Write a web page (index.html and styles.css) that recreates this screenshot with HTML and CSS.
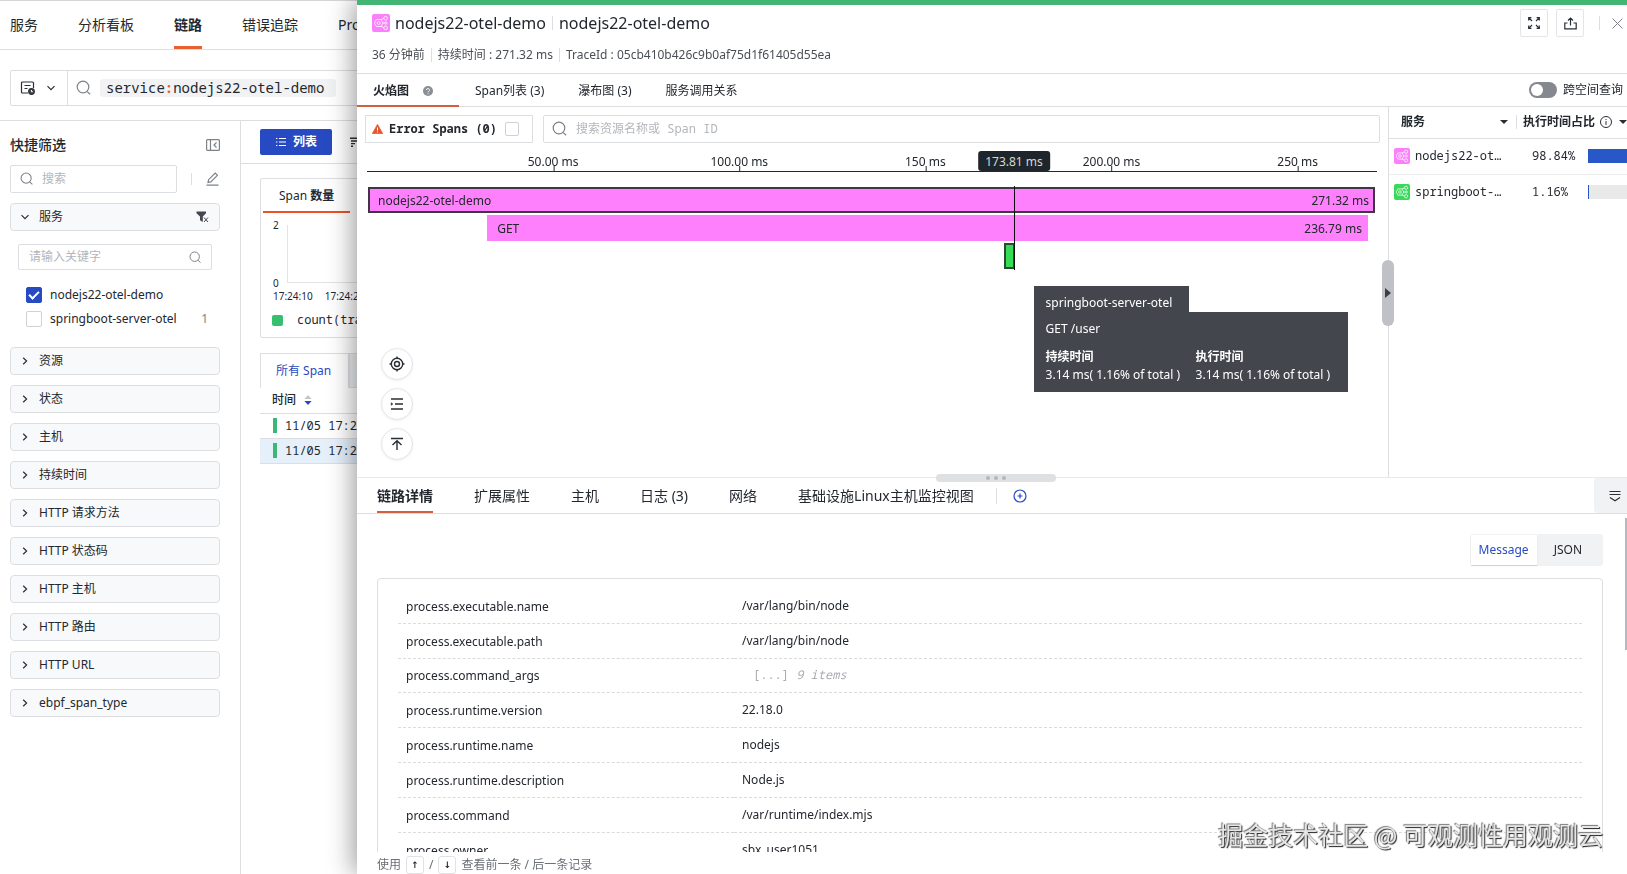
FILE: index.html
```html
<!DOCTYPE html>
<html lang="zh-CN">
<head>
<meta charset="utf-8">
<title>链路</title>
<link rel="stylesheet" href="styles.css">
</head>
<body>
<svg class="defs" aria-hidden="true">
  <symbol id="i-search" viewBox="0 0 16 16"><circle cx="7" cy="7" r="5.8"/><path d="M11.2 11.6l3 2.6"/></symbol>
  <symbol id="i-down" viewBox="0 0 10 10"><path d="M1.5 3.2L5 6.7l3.5-3.5"/></symbol>
  <symbol id="i-right" viewBox="0 0 10 10"><path d="M3.2 1.7L6.6 5 3.2 8.3"/></symbol>
  <symbol id="i-svc" viewBox="0 0 18 18"><g fill="none" stroke="#fff" stroke-width=".8"><path d="M4.4 5.500h4.600l2 3.500-2 3.500H4.400L2.400 9z"/><circle cx="6.700" cy="9" r="1.500"/><circle cx="13.600" cy="4.200" r="1.800"/><circle cx="13.800" cy="9" r="1.200"/><circle cx="13.600" cy="13.800" r="1.800"/><path d="M9 5.500l2.800-1M11 9h1.600M9 12.500l2.800 1"/></g></symbol>
</svg>

<div class="page">
  <nav class="topnav">
    <a href="#">服务</a><a href="#">分析看板</a><a href="#" class="on">链路</a><a href="#">错误追踪</a><a href="#">Profile</a>
  </nav>
  <div class="query">
    <div class="querybox">
      <button class="qtype" aria-label="查询类型">
        <svg width="16" height="16" viewBox="0 0 16 16" class="line dark"><path d="M8 13H2.5a1 1 0 0 1-1-1V3a1 1 0 0 1 1-1h10a1 1 0 0 1 1 1v5M4.5 5.5h6M4.5 8.5h3"/><circle cx="11.5" cy="11.5" r="2.8" fill="#43474f"/><path d="M11.5 10v1.7h1.3" stroke="#fff" stroke-width="1"/></svg>
        <svg width="10" height="10" class="line dark"><use href="#i-down"/></svg>
      </button>
      <div class="qtext">
        <svg width="16" height="16" class="line"><use href="#i-search"/></svg>
        <code class="tag">service<b>:</b>nodejs22-otel-demo</code>
      </div>
    </div>
  </div>
  <div class="body">
    <aside class="side">
      <div class="sidehead"><h2>快捷筛选</h2>
        <button class="plain" aria-label="收起"><svg width="14" height="12" viewBox="0 0 14 12" class="line"><rect x=".6" y=".6" width="12.8" height="10.8" rx="1"/><path d="M4.5 1v10M10.5 3.5L8 6l2.5 2.5"/></svg></button></div>
      <div class="sidesearch">
        <label class="field"><svg width="14" height="14" class="line"><use href="#i-search"/></svg><input type="text" placeholder="搜索" aria-label="搜索"></label>
        <i class="vbar"></i>
        <button class="plain" aria-label="编辑"><svg width="13" height="14" viewBox="0 0 13 14" class="line"><path d="M.5 13.2h12M2 10.5l.6-2.8 6.600-6.600 2.200 2.200-6.600 6.600z"/></svg></button>
      </div>
      <button class="facet open"><svg width="10" height="10" class="line dark"><use href="#i-down"/></svg><span>服务</span>
        <svg class="filter" width="13" height="12" viewBox="0 0 13 12"><path d="M.5.5h9.5v1.8L6.8 5.6V11L4 9.2V5.6L.5 2.3z" fill="#43474f"/><path d="M8 6.5l4 4.5M12 6.5L8 11" stroke="#43474f"/></svg></button>
      <div class="facetbody">
        <label class="field"><input type="text" placeholder="请输入关键字" aria-label="请输入关键字"><svg width="13" height="13" class="line"><use href="#i-search"/></svg></label>
        <label class="opt"><input type="checkbox" checked><span>nodejs22-otel-demo</span></label>
        <label class="opt"><input type="checkbox"><span>springboot-server-otel</span><em>1</em></label>
      </div>
      <button class="facet"><svg width="10" height="10" class="line dark"><use href="#i-right"/></svg><span>资源</span></button>
      <button class="facet"><svg width="10" height="10" class="line dark"><use href="#i-right"/></svg><span>状态</span></button>
      <button class="facet"><svg width="10" height="10" class="line dark"><use href="#i-right"/></svg><span>主机</span></button>
      <button class="facet"><svg width="10" height="10" class="line dark"><use href="#i-right"/></svg><span>持续时间</span></button>
      <button class="facet"><svg width="10" height="10" class="line dark"><use href="#i-right"/></svg><span>HTTP 请求方法</span></button>
      <button class="facet"><svg width="10" height="10" class="line dark"><use href="#i-right"/></svg><span>HTTP 状态码</span></button>
      <button class="facet"><svg width="10" height="10" class="line dark"><use href="#i-right"/></svg><span>HTTP 主机</span></button>
      <button class="facet"><svg width="10" height="10" class="line dark"><use href="#i-right"/></svg><span>HTTP 路由</span></button>
      <button class="facet"><svg width="10" height="10" class="line dark"><use href="#i-right"/></svg><span>HTTP URL</span></button>
      <button class="facet"><svg width="10" height="10" class="line dark"><use href="#i-right"/></svg><span>ebpf_span_type</span></button>
    </aside>
    <main class="main">
      <div class="modes">
        <button class="primary"><svg width="10" height="10" viewBox="0 0 10 10" stroke="#fff" stroke-width="1.1"><path d="M0 1.5h1.4M3 1.5h7M0 5h1.4M3 5h7M0 8.5h1.4M3 8.5h7"/></svg>列表</button>
        <svg width="10" height="10" viewBox="0 0 10 10" stroke="#2a2e35" stroke-width="1.4"><path d="M0 1.2h10M1 4h7M1 6.6h4M1 9.2h2"/></svg>
      </div>
      <section class="card chart">
        <h3>Span <b>数量</b></h3>
        <div class="plot">
          <div class="yax"><span>2</span><span>0</span></div>
          <div class="area"></div>
        </div>
        <div class="xax"><span>17:24:10</span><span>17:24:20</span></div>
        <div class="legend"><i></i>count(trace)</div>
      </section>
      <section class="list">
        <div class="ltabs"><button class="on">所有 Span</button><button></button></div>
        <table>
          <thead><tr><th>时间 <svg width="8" height="10" viewBox="0 0 8 10"><path d="M4 0l3.6 4H.4z" fill="#c3c6cb"/><path d="M4 10L.4 6h7.2z" fill="#274ac2"/></svg></th></tr></thead>
          <tbody><tr><td><i></i>11/05 17:24:12</td></tr><tr class="sel"><td><i></i>11/05 17:24:12</td></tr></tbody>
        </table>
      </section>
    </main>
  </div>
</div>

<div class="drawer" role="dialog" aria-label="nodejs22-otel-demo">
  <header class="dhead">
    <div class="dtitle">
      <h1><span class="svc pink"><svg width="18" height="18"><use href="#i-svc"/></svg></span>nodejs22-otel-demo<i class="vbar"></i>nodejs22-otel-demo</h1>
      <p>36 分钟前<i class="vbar"></i>持续时间 : 271.32 ms<i class="vbar"></i>TraceId : 05cb410b426c9b0af75d1f61405d55ea</p>
    </div>
    <div class="dacts">
      <button aria-label="全屏"><svg width="12" height="12" viewBox="0 0 12 12" class="line dark"><path d="M.7 3.400V.7h2.700M.7.7L4 4M8.600.7h2.700v2.700M11.300.7L8 4M.7 8.600v2.700h2.700M.7 11.300L4 8M8.600 11.300h2.700V8.600M11.300 11.300L8 8"/></svg></button>
      <button aria-label="分享"><svg width="13" height="13" viewBox="0 0 13 13" class="line dark"><path d="M3.500 6H.8v5.800h11.400V6H9.500M6.500 8.500V1.200M4 3.500l2.500-2.500L9 3.500"/></svg></button>
      <i class="vbar"></i>
      <button class="plain" aria-label="关闭"><svg width="11" height="11" viewBox="0 0 11 11" class="line thin"><path d="M.5.5l10 10M10.500.5l-10 10"/></svg></button>
    </div>
  </header>
  <div class="vtabs">
    <button class="on">火焰图 <svg width="10" height="10" viewBox="0 0 10 10"><circle cx="5" cy="5" r="5" fill="#8b8e94"/><path d="M3.500 4a1.500 1.500 0 1 1 2.200 1.300c-.5.3-.7.5-.7 1M5 7.400v.9" fill="none" stroke="#fff"/></svg></button>
    <button>Span列表 (3)</button><button>瀑布图 (3)</button><button>服务调用关系</button>
    <label class="switch"><input type="checkbox" role="switch">跨空间查询</label>
  </div>
  <div class="split">
    <section class="flame">
      <div class="ftools">
        <label class="errbox"><svg width="11" height="10" viewBox="0 0 11 10"><path d="M5.500.3L10.900 9.700H.1z" fill="#e8552d" stroke="#e8552d" stroke-linejoin="round" stroke-width=".6"/><path d="M5.500 3.500v3M5.500 7.500v1" stroke="#fff"/></svg>Error Spans (0)<input type="checkbox"></label>
        <label class="field"><svg width="16" height="16" class="line"><use href="#i-search"/></svg><input class="mono" type="text" placeholder="搜索资源名称或 Span ID" aria-label="搜索资源名称或 Span ID"></label>
      </div>
      <div class="graph">
        <div class="axis">
          <span style="left:18.43%">50.00 ms</span><span style="left:36.86%">100.00 ms</span><span style="left:55.28%">150 ms</span><span style="left:73.71%">200.00 ms</span><span style="left:92.14%">250 ms</span>
        </div>
        <div class="frow root"><span>nodejs22-otel-demo</span><span>271.32 ms</span></div>
        <div class="frow" style="margin-left:11.9%;width:87.2%"><span>GET</span><span>236.79 ms</span></div>
        <div class="frow hit" style="margin-left:63.1%;width:1.1%"></div>
        <div class="cursor" style="left:64.06%"><b>173.81 ms</b><i></i></div>
        <div class="tip" style="left:66%">
          <div class="tiphead">springboot-server-otel</div>
          <div class="tipbody"><p>GET /user</p>
            <dl><div><dt>持续时间</dt><dd>3.14 ms( 1.16% of total )</dd></div><div><dt>执行时间</dt><dd>3.14 ms( 1.16% of total )</dd></div></dl>
          </div>
        </div>
      </div>
      <div class="fabs">
        <button aria-label="定位"><svg width="16" height="16" viewBox="0 0 16 16" class="line dark bold"><circle cx="8" cy="8" r="5.700"/><circle cx="8" cy="8" r="2.500"/><path d="M8 .5v2M8 13.500v2M.5 8h2M13.500 8h2"/></svg></button>
        <button aria-label="展开"><svg width="14" height="14" viewBox="0 0 14 14" class="line dark bold"><path d="M1 2h12M5 7h8M1 12h12"/><path d="M1.200 5.800L2.800 7l-1.600 1.200z" stroke-width=".6" fill="#2a2e35"/></svg></button>
        <button aria-label="回到顶部"><svg width="14" height="14" viewBox="0 0 14 14" class="line dark bold"><path d="M1 1.500h12M7 13V4M2.500 8L7 3.700 11.500 8"/></svg></button>
      </div>
    </section>
    <section class="svcs">
      <button class="vgrip" aria-label="收起"><svg width="6" height="10" viewBox="0 0 6 10"><path d="M0 0l6 5-6 5z" fill="#3b3f47"/></svg></button>
      <table>
        <thead><tr><th><div class="hd">服务<i class="caret"></i></div></th><th class="c2"><div class="hd">执行时间占比<svg width="12" height="12" viewBox="0 0 12 12" class="line dark thin"><circle cx="6" cy="6" r="5.500"/><path d="M6 5v4M6 3v1"/></svg><i class="caret"></i></div></th></tr></thead>
        <tbody>
          <tr><td><div class="cell"><span class="svc pink"><svg width="16" height="16"><use href="#i-svc"/></svg></span>nodejs22-ot…</div></td><td><div class="cell pct"><span>98.84%</span><i class="meter"><i style="width:98.84%"></i></i></div></td></tr>
          <tr><td><div class="cell"><span class="svc green"><svg width="16" height="16"><use href="#i-svc"/></svg></span>springboot-…</div></td><td><div class="cell pct"><span>1.16%</span><i class="meter"><i style="width:1.16%"></i></i></div></td></tr>
        </tbody>
      </table>
    </section>
    <div class="hgrip"><i></i><i></i><i></i></div>
  </div>
  <div class="dtabs">
    <button class="on">链路详情</button><button>扩展属性</button><button>主机</button><button>日志 (3)</button><button>网络</button><button>基础设施Linux主机监控视图</button>
    <i class="vbar"></i>
    <button class="add" aria-label="添加"><svg width="14" height="14" viewBox="0 0 14 14" fill="none" stroke="#274ac2" stroke-width="1.200"><circle cx="7" cy="7" r="6"/><path d="M7 4.500v5M4.500 7h5"/></svg></button>
    <button class="fold" aria-label="收起"><svg width="12" height="12" viewBox="0 0 12 12" class="line dark"><path d="M.5 1.500h11M.5 4.500h11M1 7.500l5 3.300 5-3.300"/></svg></button>
  </div>
  <div class="detail">
    <div class="seg"><button class="on">Message</button><button>JSON</button></div>
    <div class="kv">
      <table>
        <tr><th>process.executable.name</th><td>/var/lang/bin/node</td></tr>
        <tr><th>process.executable.path</th><td>/var/lang/bin/node</td></tr>
        <tr class="arr"><th>process.command_args</th><td>[...] <em>9 items</em></td></tr>
        <tr><th>process.runtime.version</th><td>22.18.0</td></tr>
        <tr><th>process.runtime.name</th><td>nodejs</td></tr>
        <tr><th>process.runtime.description</th><td>Node.js</td></tr>
        <tr><th>process.command</th><td>/var/runtime/index.mjs</td></tr>
        <tr><th>process.owner</th><td>sbx_user1051</td></tr>
      </table>
    </div>
    <i class="thumb"></i>
  </div>
  <footer class="dfoot">使用 <kbd>↑</kbd>/<kbd>↓</kbd> 查看前一条 / 后一条记录</footer>
</div>
<div class="mark">掘金技术社区 @ 可观测性用观测云</div>
</body>
</html>
```
FILE: styles.css
```css
:root {
  --ink: #23272e;
  --line: #dcdee1;
  --blue: #274ac2;
  --orange: #e8602f;
  --mono: "Noto Sans Mono", "DejaVu Sans Mono", "Noto Sans CJK SC", monospace;
}
* { box-sizing: border-box; }
body {
  margin: 0;
  height: 100vh;
  overflow: hidden;
  background: #fff;
  color: var(--ink);
  font: 12px/18px "Noto Sans", "Noto Sans CJK SC", sans-serif;
}
h1, h2, h3, p, dl, dd { margin: 0; font-weight: 400; }
i, em { font-style: normal; }
button, input { font: inherit; color: inherit; margin: 0; }
button { border: 0; background: none; padding: 0; text-align: left; }
a { color: inherit; text-decoration: none; }
table { border-collapse: collapse; width: 100%; }
th, td { padding: 0; text-align: left; font-weight: 400; }
svg { flex: none; display: block; }
.defs { position: absolute; width: 0; height: 0; }
.line { fill: none; stroke: #7d8188; stroke-width: 1.2; }
.dark { stroke: #2a2e35; }
.bold { stroke-width: 1.4; }
.thin { stroke-width: 1; }
.mono { font-family: var(--mono); }
.vbar { flex: none; width: 1px; height: 14px; background: #dcdee1; }

.page { height: 100vh; display: flex; flex-direction: column; border-top: 1px solid #d5d6d8; }
.topnav { display: flex; gap: 40px; height: 49px; padding-left: 10px; border-bottom: 1px solid var(--line); font-size: 14px; line-height: 48px; }
.topnav .on { font-weight: 600; border-bottom: 3px solid var(--orange); }
.query { padding: 20px 0 14px 10px; border-bottom: 1px solid var(--line); }
.querybox { display: flex; height: 36px; border: 1px solid var(--line); border-radius: 2px; }
.qtype { display: flex; align-items: center; gap: 10px; width: 57px; padding-left: 9px; border-right: 1px solid var(--line); }
.qtext { display: flex; align-items: center; gap: 8px; padding-left: 8px; }
.tag { padding: 0 12px 0 6px; background: #f1f2f4; border-radius: 3px; font: 14px/18px var(--mono); }
.tag b { color: var(--orange); }
.body { flex: 1; display: flex; min-height: 0; }

.side { display: flex; flex-direction: column; gap: 10px; width: 241px; padding: 14px 20px 0 10px; border-right: 1px solid var(--line); }
.sidehead { display: flex; justify-content: space-between; align-items: center; height: 20px; }
.sidehead h2 { font-size: 14px; font-weight: 500; }
.sidesearch { display: flex; align-items: center; gap: 14px; }
.sidesearch .vbar { height: 12px; }
.field { display: flex; align-items: center; gap: 8px; height: 28px; padding: 0 9px; border: 1px solid var(--line); border-radius: 2px; }
.field input { flex: 1; min-width: 0; width: 100%; border: 0; outline: 0; padding: 0; background: none; }
.field input::placeholder { color: #b3b6bb; opacity: 1; }
.sidesearch .field { width: 167px; }
.facet { display: flex; align-items: center; gap: 9px; height: 28px; padding: 0 10px 0 9px; border: 1px solid var(--line); border-radius: 4px; background: #f8f9fa; }
.facet .filter { margin-left: auto; }
.facetbody { display: flex; flex-direction: column; gap: 8px; padding: 3px 8px 10px; }
.facetbody .field { height: 26px; margin-bottom: 9px; padding: 0 9px 0 10px; }
.opt { display: flex; align-items: center; gap: 8px; height: 16px; padding: 0 4px 0 8px; }
.opt em { margin-left: auto; color: #7d8188; }
input[type=checkbox] { appearance: none; width: 16px; height: 16px; border: 1px solid #cfd1d5; border-radius: 2px; background: #fff; }
input[type=checkbox]:checked { border-color: var(--blue); background: var(--blue); display: grid; place-items: center; }
input[type=checkbox]:checked::after { content: ""; width: 8px; height: 4px; border: solid #fff; border-width: 0 0 2px 2px; transform: rotate(-45deg); margin-bottom: 3px; }

.main { flex: 1; min-width: 0; }
.modes { display: flex; align-items: center; gap: 18px; height: 43px; padding-left: 19px; border-bottom: 1px solid var(--line); }
.primary { display: flex; align-items: center; gap: 7px; height: 26px; padding: 0 15px 0 16px; border-radius: 2px; background: var(--blue); color: #fff; font-weight: 700; }
.card { margin: 14px 0 15px 19px; border: 1px solid var(--line); border-radius: 2px; }
.chart { height: 160px; }
.chart h3 { display: inline-block; margin-left: 2px; padding: 8px 16px 6px; border-bottom: 2px solid #ee5124; font-size: 12px; line-height: 18px; }
.plot { display: flex; gap: 8px; height: 58px; margin-top: 12px; padding-left: 12px; }
.yax { display: flex; flex-direction: column; justify-content: space-between; margin: -9px 0; font-size: 10px; }
.area { flex: 1; border: solid #e3e4e6; border-width: 0 0 1px 1px; }
.xax { display: flex; gap: 12px; margin-top: 5px; padding-left: 12px; font-size: 10px; line-height: 16px; }
.legend { display: flex; align-items: center; gap: 14px; margin-top: 7px; padding-left: 11px; font-family: var(--mono); line-height: 18px; }
.legend i { width: 11px; height: 11px; border-radius: 2px; background: #35bf6e; }
.list { margin-left: 19px; }
.ltabs { display: flex; height: 35px; }
.ltabs button { flex: 1; border: 1px solid var(--line); background: #eceef0; }
.ltabs .on { flex: none; width: 89px; padding-left: 15px; border-width: 1px 1px 0; background: #fff; color: var(--blue); }
.list th { height: 25px; padding-left: 12px; border-bottom: 1px solid var(--line); font-weight: 500; }
.list th svg { display: inline-block; margin-left: 5px; vertical-align: -1px; }
.list td { height: 25px; padding-left: 13px; border-bottom: 1px solid var(--line); font-family: var(--mono); white-space: nowrap; }
.list td i { display: inline-block; width: 4px; height: 15px; margin-right: 8px; background: #3bb876; vertical-align: -3px; }
.sel { background: #e5f0fa; }

.drawer { position: fixed; top: 0; right: 0; bottom: 0; left: 357px; display: flex; flex-direction: column; border-top: 5px solid #42b573; background: #fff; box-shadow: -4px 0 24px rgba(0, 0, 0, .38); }
.dhead { flex: none; display: flex; justify-content: space-between; align-items: flex-start; height: 69px; padding: 4px 0 0 15px; border-bottom: 1px solid var(--line); }
.dtitle h1 { display: flex; align-items: center; height: 28px; font-size: 16px; }
.dtitle h1 .svc { margin-right: 5px; }
.dtitle h1 .vbar { margin: 0 6px; }
.dtitle p { display: flex; align-items: center; height: 36px; color: #4a4e55; }
.dtitle p .vbar { margin: 0 6px; }
.svc { flex: none; display: inline-block; border-radius: 2px; }
.pink { background: #fb80fb; }
.green { background: #3ad95c; }
.dacts { display: flex; align-items: center; gap: 8px; padding-right: 4px; }
.dacts button { display: grid; place-items: center; width: 28px; height: 28px; border: 1px solid #e4e5e8; border-radius: 2px; }
.dacts .vbar { margin: 0 4px 0 7px; }
.dacts .plain { width: 11px; border: 0; }
.vtabs { flex: none; display: flex; height: 33px; border-bottom: 1px solid var(--line); }
.vtabs button { margin-right: 34px; padding-top: 2px; color: var(--ink); }
.vtabs .on { display: flex; align-items: center; gap: 14px; width: 102px; margin-right: 16px; padding-left: 16px; border-bottom: 2px solid #d1603f; font-weight: 600; margin-bottom: -1px; }
.switch { display: flex; align-items: center; gap: 6px; margin-left: auto; padding-right: 4px; }
input[role=switch] { display: flex; align-items: center; width: 28px; height: 16px; padding-left: 2px; border: 0; border-radius: 8px; background: #85898f; }
input[role=switch]::before { content: ""; width: 12px; height: 12px; border-radius: 50%; background: #fff; }

.split { position: relative; flex: none; display: flex; height: 371px; border-bottom: 1px solid #e8e9eb; }
.flame { flex: 1; min-width: 0; }
.ftools { display: flex; gap: 10px; padding: 8px 8px 0; }
.errbox { display: flex; align-items: center; gap: 6px; height: 28px; width: 168px; padding: 0 6px; border: 1px solid var(--line); font: 700 12px/18px var(--mono); }
.errbox input { width: 14px; height: 14px; margin-left: 2px; }
.ftools .field { flex: 1; padding-left: 8px; }
.graph { position: relative; margin: 8px 11px 0 10px; }
.axis { height: 21px; border-bottom: 1px solid var(--ink); margin-bottom: 15px; position: relative; }
.axis span { position: absolute; top: 0; transform: translateX(-50%); line-height: 20px; padding-top: 1px; height: 20px; white-space: nowrap; }
.axis span::after { content: ""; position: absolute; left: 50%; bottom: 0; width: 1px; height: 5px; background: var(--ink); }
.frow { display: flex; justify-content: space-between; align-items: center; height: 26px; margin-bottom: 2px; padding: 2px 6px 0 10px; background: #ff80fc; }
.root { margin: 0 2px 2px 1px; padding: 2px 4px 0 8px; border: 2px solid #413646; }
.hit { padding: 0; border: 2px solid #2d4a38; background: #37dc56; }
.cursor { position: absolute; top: 0; }
.cursor b { position: absolute; top: 0; left: 0; transform: translateX(-50%); padding: 2px 7px 0; border-radius: 3px; background: #1f262b; color: #d5d7d9; font-weight: 400; white-space: nowrap; }
.cursor i { position: absolute; top: 35px; left: 0; width: 1px; height: 84px; background: #111; }
.tip { position: absolute; top: 135px; color: #fff; line-height: 18px; }
.tiphead { display: inline-block; min-width: 155px; padding: 8px 12px 0; background: #43464d; vertical-align: top; }
.tipbody { padding: 8px 12px; background: #43464d; white-space: nowrap; }
.tipbody dl { display: flex; gap: 10px; margin-top: 10px; }
.tipbody dl div { min-width: 140px; }
.tipbody dt { font-weight: 700; }
.fabs { position: absolute; left: 24px; bottom: 17px; display: flex; flex-direction: column; gap: 8px; }
.fabs button { display: grid; place-items: center; width: 32px; height: 32px; border: 1px solid #e4e6e8; border-radius: 50%; background: #fff; box-shadow: 0 1px 3px rgba(0, 0, 0, .06); }
.svcs { position: relative; width: 239px; border-left: 1px solid var(--line); }
.svcs table { table-layout: fixed; }
.svcs th { height: 31px; border-bottom: 1px solid var(--line); font-weight: 600; }
.svcs th:first-child { width: 127px; }
.svcs td { height: 36px; border-bottom: 1px solid #eceded; font-family: var(--mono); }
.svcs tr:last-child td { border: 0; }
.hd { display: flex; align-items: center; padding: 0 8px 0 12px; }
.hd .caret { margin-left: auto; border: 4px solid transparent; border-top: 4px solid #2a2e35; border-bottom: 0; }
.c2 .hd { gap: 5px; padding: 0 0 0 6px; border-left: 1px solid var(--line); line-height: 14px; white-space: nowrap; }
.cell { display: flex; align-items: center; gap: 5px; padding-left: 5px; white-space: nowrap; }
.pct { gap: 0; padding-left: 16px; }
.pct span { width: 56px; }
.meter { flex: 1; height: 14px; background: #e9e9ea; }
.meter i { display: block; height: 14px; background: #2857c7; }
.vgrip { position: absolute; z-index: 1; left: -7px; top: 153px; display: grid; place-items: center; width: 12px; height: 66px; border-radius: 6px; background: #bfc1c6; }
.hgrip { position: absolute; left: 579px; bottom: -5px; display: flex; align-items: center; justify-content: center; gap: 4px; width: 120px; height: 8px; border-radius: 4px; background: #dfe0e2; }
.hgrip i { width: 4px; height: 4px; border-radius: 50%; background: #b4b7bb; }

.dtabs { flex: none; display: flex; gap: 41px; height: 36px; padding-left: 20px; border-bottom: 1px solid var(--line); font-size: 14px; white-space: nowrap; }
.dtabs .on { font-weight: 600; border-bottom: 2px solid #d1603f; padding-top: 2px; }
.dtabs .vbar { align-self: center; margin-left: -19px; height: 16px; }
.dtabs .add { margin-left: -25px; }
.dtabs .fold { display: grid; place-items: center; width: 33px; margin-left: auto; padding-left: 8px; background: #f1f2f4; border-radius: 4px 0 0 4px; }
.detail { position: relative; flex: 1; min-height: 0; overflow: hidden; padding: 20px 24px 0 20px; }
.seg { display: flex; width: max-content; margin-left: auto; padding: 1px; border-radius: 3px; background: #f1f2f4; }
.seg button { height: 30px; padding: 0 20px 0 17px; }
.seg .on { padding: 0 8px; background: #fff; color: var(--blue); box-shadow: 0 1px 1px rgba(0, 0, 0, .12); }
.kv { margin-top: 12px; padding: 10px 20px; border: 1px solid var(--line); border-radius: 4px; }
.kv th, .kv td { height: 35px; padding-left: 8px; border-bottom: 1px dashed #d9dbde; }
.kv th { width: 336px; padding-top: 2px; }
.kv tr:first-child > *, .kv .arr > * { height: 34px; }
.kv .arr td { padding-left: 19px; color: #a9acb1; font-family: var(--mono); }
.kv .arr em { font-style: italic; }
.thumb { position: absolute; right: 0; top: 4px; width: 2px; height: 132px; background: #b5b8bc; }
.dfoot { flex: none; display: flex; align-items: center; gap: 4px; height: 22px; padding: 3px 0 0 20px; color: #6b6f76; }
.dfoot kbd { width: 18px; height: 18px; margin: 0 1px; border: 1px solid #e0e2e4; border-radius: 3px; color: var(--ink); font: 700 9px/17px "DejaVu Sans", sans-serif; text-align: center; }
.mark { position: fixed; right: 24px; bottom: 22px; color: #e6e6e6; font: 25px/36px "Noto Sans CJK SC", sans-serif; text-shadow: -1px -1px 1px #777, 1px 1px 1px #222; }
```
